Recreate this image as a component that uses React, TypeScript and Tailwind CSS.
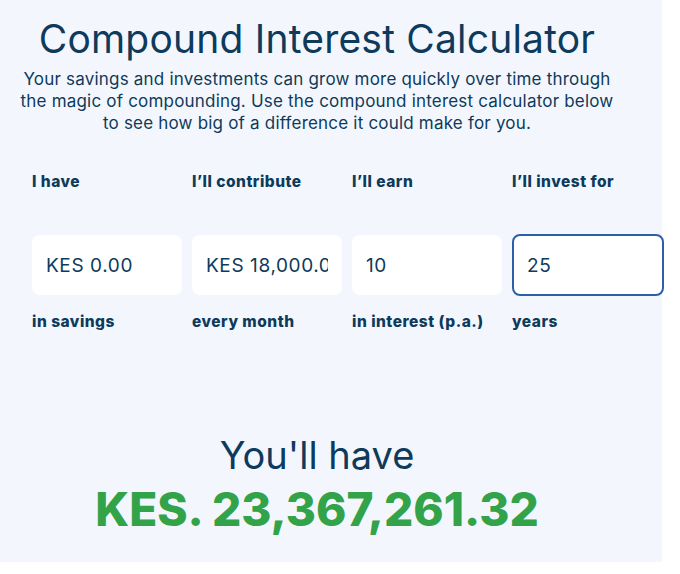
const fields = [
  { top: "I have", value: "KES 0.00", bottom: "in savings" },
  { top: "I’ll contribute", value: "KES 18,000.00", bottom: "every month" },
  { top: "I’ll earn", value: "10", bottom: "in interest (p.a.)" },
  { top: "I’ll invest for", value: "25", bottom: "years", focused: true },
];

export default function App() {
  return (
    <div className="h-[574px] w-[680px] overflow-hidden bg-white font-['Inter',sans-serif] text-[#0e3a5b]">
      <div className="h-[562px] w-[662px] bg-[#f3f7fd]">
        <div className="w-[634px] pt-[16px] text-center">
          <h1 className="text-[39px] leading-[46px] font-normal tracking-[0.2px]">Compound Interest Calculator</h1>
          <p className="mt-[6px] text-[17px] leading-[22px] tracking-[0.2px]">
            Your savings and investments can grow more quickly over time through
            <br />
            the magic of compounding. Use the compound interest calculator below
            <br />
            to see how big of a difference it could make for you.
          </p>
        </div>

        <div className="mt-[36px] grid grid-cols-[150px_150px_150px_152px] gap-x-[10px] pl-[32px]">
          {fields.map((f) => (
            <div key={f.top} className="flex flex-col">
              <label className="h-[24px] text-[15.5px] leading-[24px] font-extrabold tracking-[0.5px]">{f.top}</label>
              <input
                readOnly
                value={f.value}
                className={
                  f.focused
                    ? "mt-[40px] h-[62px] w-full rounded-[8px] border-2 border-[#2d5fa8] bg-white px-[13px] text-[19px] tracking-[0.6px] text-[#0e3a5b] outline-none"
                    : "mt-[41px] h-[60px] w-full rounded-[8px] bg-white px-[14px] text-[19px] tracking-[0.6px] text-[#0e3a5b] outline-none"
                }
              />
              <span
                className={
                  (f.focused ? "mt-[14px]" : "mt-[15px]") +
                  " text-[15.5px] leading-[24px] font-extrabold tracking-[0.5px]"
                }
              >
                {f.bottom}
              </span>
            </div>
          ))}
        </div>

        <div className="w-[634px] pt-[98px] text-center">
          <div className="text-[38px] leading-[46px]">You'll have</div>
          <div className="mt-[3px] text-[46px] leading-[56px] font-extrabold text-[#33a349]">KES. 23,367,261.32</div>
        </div>
      </div>
    </div>
  );
}
